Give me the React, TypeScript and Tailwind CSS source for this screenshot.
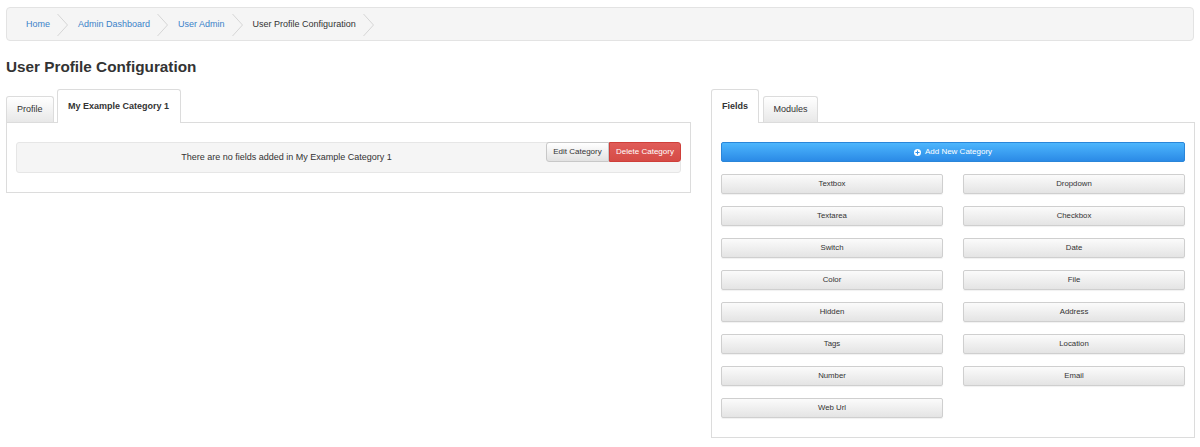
import React from "react";

const crumbs = ["Home", "Admin Dashboard", "User Admin"];

const fieldTypes = [
  "Textbox",
  "Dropdown",
  "Textarea",
  "Checkbox",
  "Switch",
  "Date",
  "Color",
  "File",
  "Hidden",
  "Address",
  "Tags",
  "Location",
  "Number",
  "Email",
  "Web Url",
];

function Chevron() {
  return (
    <svg width="11" height="22" viewBox="0 0 11 22" className="ml-[7px] mr-[10px] shrink-0">
      <polyline points="0.5,0 10.5,11 0.5,22" fill="none" stroke="#d6d6d6" strokeWidth="1" />
    </svg>
  );
}

function PlusCircle() {
  return (
    <svg width="7" height="7" viewBox="0 0 14 14" className="mr-[4px]">
      <circle cx="7" cy="7" r="7" fill="#ffffff" />
      <rect x="3" y="6" width="8" height="2" fill="#2f93ec" />
      <rect x="6" y="3" width="2" height="8" fill="#2f93ec" />
    </svg>
  );
}

export default function App() {
  return (
    <div className="w-[1200px] h-[447px] bg-white text-[#333] font-['Liberation_Sans',Arial,sans-serif] overflow-hidden">
      {/* Breadcrumb */}
      <div className="mx-[6px] mt-[7px] h-[34px] flex items-center pl-[19px] pt-[2px] bg-[#f5f5f5] border border-[#e3e3e3] rounded-[4px] text-[9px]">
        {crumbs.map((c) => (
          <React.Fragment key={c}>
            <span className="text-[#3b82c9]">{c}</span>
            <Chevron />
          </React.Fragment>
        ))}
        <span className="text-[#333]">User Profile Configuration</span>
        <Chevron />
      </div>

      <h1 className="mt-[17px] ml-[6px] h-[18px] leading-[18px] text-[15.3px] font-bold text-[#333]">
        User Profile Configuration
      </h1>

      <div className="flex mt-[13px] ml-[6px] gap-[20px]">
        {/* Left: categories */}
        <div className="w-[685px]">
          <div className="flex items-end gap-[3px] h-[33px]">
            <div className="w-[48px] h-[26px] pt-[6px] pl-[10px] text-[9px] leading-[12px] border border-b-0 border-[#dcdcdc] rounded-t-[3px] bg-gradient-to-b from-white to-[#e8e8e8]">
              Profile
            </div>
            <div className="relative z-10 -mb-px w-[124px] h-[34px] pt-[10px] pl-[10px] text-[9px] leading-[12px] font-bold border border-b-0 border-[#dcdcdc] rounded-t-[3px] bg-white">
              My Example Category 1
            </div>
          </div>
          <div className="border border-[#dcdcdc] pt-[19px] pb-[19px] px-[9px]">
            <div className="flex h-[31px] bg-[#f5f5f5] border border-[#e6e6e6] rounded-[3px]">
              <div className="flex-1 pl-[10px] flex items-center justify-center text-[9px]">
                There are no fields added in My Example Category 1
              </div>
              <div className="flex -mt-px -mr-px h-[20px]">
                <button className="w-[63px] h-[20px] text-[8px] text-[#333] border border-[#c8c8c8] rounded-l-[3px] bg-gradient-to-b from-white to-[#e2e2e2]">
                  Edit Category
                </button>
                <button className="w-[72px] h-[20px] text-[8px] text-white border border-[#cf3f3a] rounded-r-[3px] bg-gradient-to-b from-[#e05c58] to-[#d54b46]">
                  Delete Category
                </button>
              </div>
            </div>
          </div>
        </div>

        {/* Right: field palette */}
        <div className="w-[484px]">
          <div className="flex items-end gap-[4px] h-[33px]">
            <div className="relative z-10 -mb-px w-[48px] h-[34px] pt-[10px] pl-[10px] text-[9px] leading-[12px] font-bold border border-b-0 border-[#dcdcdc] rounded-t-[3px] bg-white">
              Fields
            </div>
            <div className="w-[55px] h-[26px] pt-[6px] text-center text-[9px] leading-[12px] border border-b-0 border-[#dcdcdc] rounded-t-[3px] bg-gradient-to-b from-white to-[#e8e8e8]">
              Modules
            </div>
          </div>
          <div className="border border-[#dcdcdc] pt-[19px] pb-[19px] px-[9px]">
            <button className="w-full h-[20px] flex items-center justify-center text-[8px] text-white border border-[#2a86d9] rounded-[2px] bg-gradient-to-b from-[#4db6fd] to-[#2b8ae6]">
              <PlusCircle />
              Add New Category
            </button>
            <div className="grid grid-cols-2 gap-x-[20px] gap-y-[12px] mt-[12px]">
              {fieldTypes.map((f) => (
                <button
                  key={f}
                  className="h-[20px] text-[7.8px] text-[#333] border border-[#cfcfcf] rounded-[2px] bg-gradient-to-b from-[#fbfbfb] to-[#e4e4e4] shadow-[0_1px_1px_rgba(0,0,0,0.06)]"
                >
                  {f}
                </button>
              ))}
            </div>
          </div>
        </div>
      </div>
    </div>
  );
}
